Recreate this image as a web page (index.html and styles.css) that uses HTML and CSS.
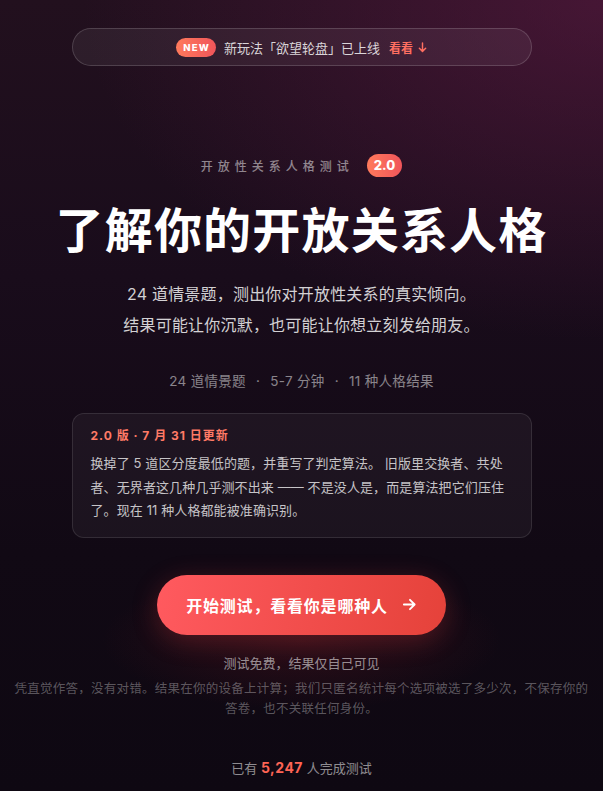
FILE: index.html
```html
<!DOCTYPE html>
<html lang="zh-CN">
<head>
<meta charset="utf-8">
<title>开放性关系人格测试</title>
<link rel="stylesheet" href="styles.css">
</head>
<body>
<div class="page">
  <div class="banner">
    <span class="pill">NEW</span>
    <span class="banner-text">新玩法「欲望轮盘」已上线</span>
    <span class="banner-link">看看 <svg class="down" viewBox="0 0 10 12" width="9" height="11"><path d="M5 1v9M1.5 6.8 5 10.3l3.5-3.5" fill="none" stroke="currentColor" stroke-width="1.6" stroke-linecap="round" stroke-linejoin="round"/></svg></span>
  </div>

  <div class="eyebrow-row">
    <span class="eyebrow">开放性关系人格测试</span>
    <span class="ver">2.0</span>
  </div>

  <h1 class="title">了解你的开放关系人格</h1>

  <p class="sub">24 道情景题，测出你对开放性关系的真实倾向。<br>结果可能让你沉默，也可能让你想立刻发给朋友。</p>

  <p class="meta">24 道情景题 <span class="dot">·</span> 5-7 分钟 <span class="dot">·</span> 11 种人格结果</p>

  <div class="card">
    <div class="card-title">2.0 版 · 7 月 31 日更新</div>
    <p class="card-body">换掉了 5 道区分度最低的题，并重写了判定算法。 旧版里交换者、共处者、无界者这几种几乎测不出来 —— 不是没人是，而是算法把它们压住了。现在 11 种人格都能被准确识别。</p>
  </div>

  <button class="cta">开始测试，看看你是哪种人 <svg class="arrow" viewBox="0 0 16 16" width="15" height="15"><path d="M2 8h11.5M8.5 3l5 5-5 5" fill="none" stroke="currentColor" stroke-width="2" stroke-linecap="round" stroke-linejoin="round"/></svg></button>

  <p class="free">测试免费，结果仅自己可见</p>
  <p class="privacy">凭直觉作答，没有对错。结果在你的设备上计算；我们只匿名统计每个选项被选了多少次，不保存你的答卷，也不关联任何身份。</p>

  <p class="count">已有 <b>5,247</b> 人完成测试</p>
</div>
</body>
</html>
```
FILE: styles.css
```css
* { box-sizing: border-box; }
html, body {
  margin: 0;
  padding: 0;
  height: 100%;
}
body {
  font-family: "Inter", "Noto Sans CJK SC", sans-serif;
  color: #fff;
  background:
    radial-gradient(ellipse 200px 70px at 50% 640px, rgba(150, 30, 40, 0.22), rgba(150, 30, 40, 0) 100%),
    radial-gradient(ellipse 520px 340px at 100% 0%, rgba(105, 28, 75, 0.5), rgba(105, 28, 75, 0) 100%),
    linear-gradient(180deg, #22101e 0%, #190c1b 35%, #110914 70%, #0e0812 100%);
  overflow: hidden;
}
.page {
  display: flex;
  flex-direction: column;
  align-items: center;
  padding: 28px 14px 0;
  text-align: center;
}
.banner {
  width: 460px;
  height: 38px;
  border-radius: 19px;
  border: 1px solid rgba(255, 255, 255, 0.16);
  background: rgba(255, 255, 255, 0.06);
  display: flex;
  align-items: center;
  justify-content: center;
  gap: 8px;
}
.pill {
  background: linear-gradient(90deg, #ff7a5c, #f0555a);
  color: #fff;
  font-weight: 800;
  font-size: 9.5px;
  letter-spacing: 1.2px;
  height: 19px;
  line-height: 19px;
  padding: 0 6px 0 7.5px;
  border-radius: 10px;
}
.banner-text {
  font-size: 13px;
  color: rgba(255, 255, 255, 0.82);
  margin-right: 1px;
}
.banner-link {
  font-size: 12px;
  font-weight: 700;
  color: #ff6f61;
  display: flex;
  align-items: center;
  gap: 5px;
}
.down { margin-top: 1px; }
.eyebrow-row {
  margin-top: 88px;
  display: flex;
  align-items: center;
  gap: 13px;
}
.eyebrow {
  font-size: 12px;
  letter-spacing: 5px;
  color: rgba(255, 255, 255, 0.5);
  font-weight: 500;
}
.ver {
  background: linear-gradient(90deg, #ff7a5c, #f0555a);
  font-weight: 800;
  font-size: 13px;
  height: 23px;
  line-height: 23px;
  padding: 0 7px;
  border-radius: 12px;
}
.title {
  margin: 24px 0 0;
  font-size: 48px;
  line-height: 60px;
  letter-spacing: 1.2px;
  font-weight: 700;
  color: #fff;
}
.sub {
  margin: 18px 0 0;
  font-size: 16px;
  line-height: 31px;
  color: rgba(255, 255, 255, 0.82);
  letter-spacing: 0.2px;
}
.meta {
  margin: 29px 0 0;
  font-size: 13.5px;
  color: rgba(255, 255, 255, 0.5);
  letter-spacing: 0.3px;
}
.dot { margin: 0 6px; }
.card {
  margin-top: 23px;
  width: 460px;
  border-radius: 12px;
  border: 1px solid rgba(255, 255, 255, 0.11);
  background: rgba(255, 255, 255, 0.045);
  padding: 14px 18px 14px;
  text-align: left;
}
.card-title {
  font-size: 12px;
  font-weight: 700;
  letter-spacing: 1px;
  color: #ff7a66;
  line-height: 16px;
}
.card-body {
  margin: 8px 0 0;
  font-size: 13px;
  line-height: 23.5px;
  color: rgba(255, 255, 255, 0.75);
  letter-spacing: 0.1px;
}
.cta {
  margin-top: 37px;
  width: 289px;
  height: 60px;
  border: none;
  border-radius: 30px;
  background: linear-gradient(100deg, #ff5a5f, #e5423a);
  color: #fff;
  font-family: inherit;
  font-size: 16px;
  font-weight: 700;
  letter-spacing: 0.8px;
  display: flex;
  align-items: center;
  justify-content: center;
  gap: 14px;
  box-shadow: 0 6px 26px rgba(220, 60, 60, 0.28);
}
.free {
  margin: 18px 0 0;
  font-size: 13px;
  color: rgba(255, 255, 255, 0.55);
}
.privacy {
  margin: 7px 0 0;
  font-size: 12.5px;
  line-height: 20px;
  letter-spacing: 0.25px;
  color: rgba(255, 255, 255, 0.33);
}
.count {
  margin: 39px 0 0;
  font-size: 13px;
  color: rgba(255, 255, 255, 0.55);
}
.count b {
  color: #ff6455;
  font-weight: 700;
  font-size: 14px;
  letter-spacing: 0.5px;
}
```
